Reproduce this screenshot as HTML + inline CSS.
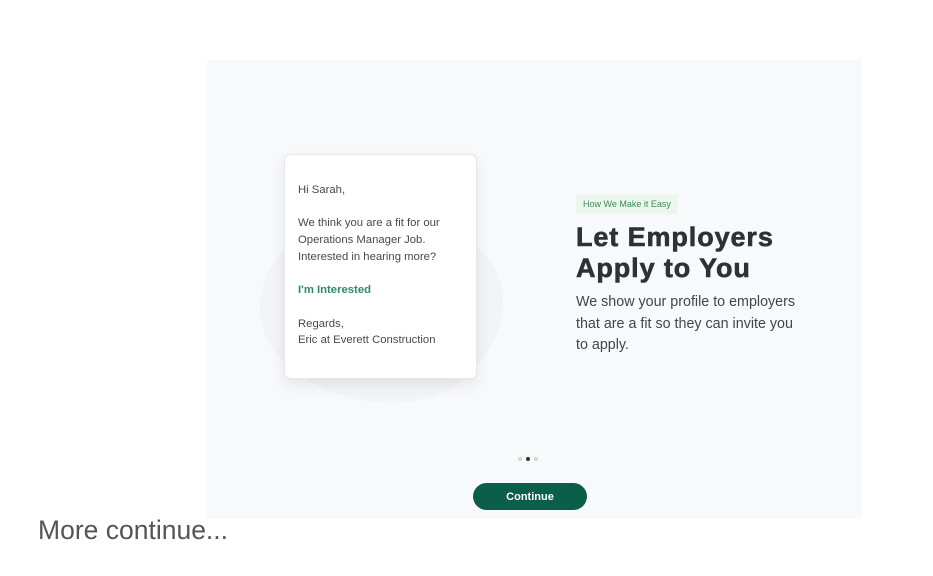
<!DOCTYPE html>
<html><head><meta charset="utf-8"><style>
*{margin:0;padding:0;box-sizing:border-box}
body{width:933px;height:576px;background:#fff;font-family:"Liberation Sans",sans-serif;position:relative;overflow:hidden}
.panel{position:absolute;left:207px;top:60px;width:655px;height:459px;background:#f8f9fb}
.blob{position:absolute;left:260px;top:213px;width:243px;height:190px;border-radius:48% 52% 45% 55%/50% 45% 55% 50%;background:#f3f4f6}
.card{position:absolute;left:284px;top:154px;width:193px;height:225px;background:#fff;border-radius:6px;border:1px solid #e6e7ea;box-shadow:0 6px 14px rgba(0,0,0,.08);padding:27px 0 0 13px;font-size:11.3px;color:#444a50;line-height:16.7px}
.g{color:#2e8a64;font-weight:bold}
.tag{position:absolute;left:576px;top:194px;height:20px;padding:0 7px;background:#ebf7ec;border-radius:3px;font-size:9px;color:#3d8a5a;line-height:20px}
h1{position:absolute;left:576px;top:222px;font-size:27px;line-height:31px;color:#2b3336;font-weight:900;letter-spacing:.9px;-webkit-text-stroke:.6px #2b3336}
.p{position:absolute;left:576px;top:292px;width:228px;font-size:14.3px;line-height:21.5px;color:#3f464b}
.dots{position:absolute;left:518px;top:457px;display:flex;gap:4px}
.dots span{display:block;width:4px;height:4px;border-radius:50%;background:#d3d5d8}
.dots span.a{background:#333}
.btn{position:absolute;left:473px;top:483px;width:114px;height:27px;border-radius:14px;background:#0b5e4a;color:#fff;font-size:11px;font-weight:bold;text-align:center;line-height:28px}
.more{position:absolute;left:38px;top:515px;font-size:26.5px;color:#555}
</style></head><body>
<div class="panel"></div>
<div class="blob"></div>
<div class="card">Hi Sarah,<br><br>We think you are a fit for our<br>Operations Manager Job.<br>Interested in hearing more?<br><br><span class="g">I'm Interested</span><br><br>Regards,<br>Eric at Everett Construction</div>
<div class="tag">How We Make it Easy</div>
<h1>Let Employers<br>Apply to You</h1>
<div class="p">We show your profile to employers that are a fit so they can invite you to apply.</div>
<div class="dots"><span></span><span class="a"></span><span></span></div>
<div class="btn">Continue</div>
<div class="more">More continue...</div>
</body></html>
